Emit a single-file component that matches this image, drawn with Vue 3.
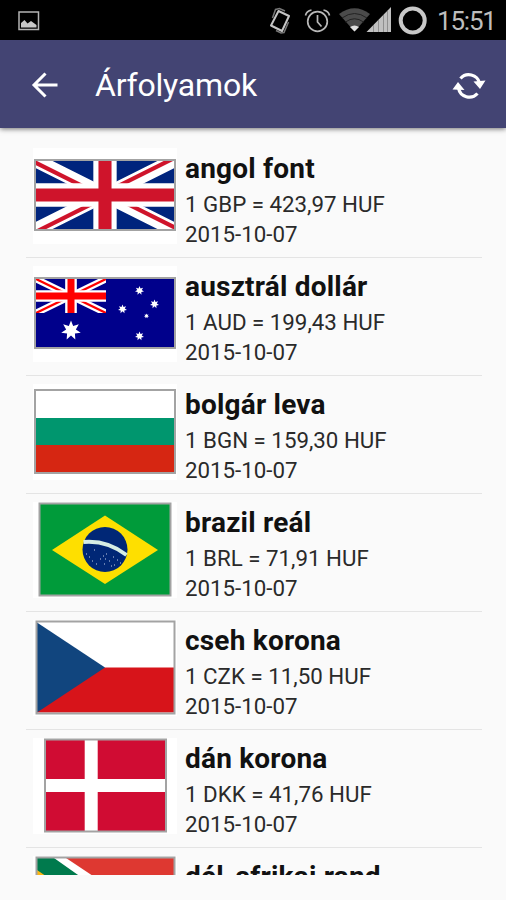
<template>
  <div class="screen">
    <div class="status-bar">
      <svg class="st-left" width="22" height="20" viewBox="0 0 22 20">
        <rect x="1" y="1" width="19.5" height="17.5" fill="none" stroke="#b4b4b4" stroke-width="1.5" />
        <path d="M3 16.5V12l3.5-3 3 3.5 3.5-2.500 5.500 4v2.500z" fill="#c8c8c8" />
      </svg>
      <svg class="st-icons" width="160" height="32" viewBox="267 5 160 32">
        <!-- 振动 -->
        <g fill="none" stroke="#c4c4c4">
          <path d="M278.500 11l10.500 5-7 15-11-5.500z" stroke-width="2" stroke-linejoin="round" />
          <path d="M272.500 18l3-8.500 4-1 5.500 2.500M288.500 22l-4.500 10.500-3 .5-5-2.500" stroke-width="1.500" stroke="#777" />
        </g>
        <!-- 闹钟 -->
        <g fill="none" stroke="#b8b8b8" stroke-width="1.700">
          <circle cx="317.500" cy="21.500" r="9.800" />
          <path d="M317.500 15v7l4 4.500M305.500 15.500q1-4.500 6-5.500M329.500 15.500q-1-4.500-6-5.500" />
        </g>
        <!-- WiFi -->
        <path d="M339 14Q354.500 2.500 370 14L354.500 31.500z" fill="#4b4b4b" />
        <path d="M342 18q12.500-9 25 0M345.500 22q9-6.500 18 0" fill="none" stroke="#222" stroke-width="1" />
        <path d="M350 27q4.500-3 9 0l-4.500 4.500z" fill="#e0e0e0" />
        <!-- 信号 -->
        <path d="M366.500 32L391 7v25z" fill="#c0c0c0" />
        <path d="M373.500 25v7M378.500 20v12M383.500 15v17M387.500 11v21" stroke="#8f8f8f" stroke-width="1" />
        <circle cx="412.700" cy="20.500" r="12" fill="none" stroke="#c8c8c8" stroke-width="4" />
      </svg>
      <span class="clock">15:51</span>
    </div>

    <div class="app-bar">
      <svg class="back" width="28" height="28" viewBox="0 0 28 28">
        <path d="M26.500 14H3M14.500 2.500L3 14l11.500 11.500" fill="none" stroke="#fff" stroke-width="3" />
      </svg>
      <h1 class="title">Árfolyamok</h1>
      <svg class="refresh" width="34" height="30" viewBox="452 69 34 30">
        <g fill="none" stroke="#fff" stroke-width="3.200">
          <path d="M460.500 77.500A11 11 0 0 1 479.500 82" />
          <path d="M477.500 92.500A11 11 0 0 1 458.500 87" />
        </g>
        <path d="M473.500 80.500l12-1-5.500 8.500zM464.500 89l-12-.5 5.500-7.500z" fill="#fff" />
      </svg>
    </div>

    <div class="list">
      <div v-for="r in rates" :key="r.code" class="row">
        <svg class="flag" width="144" height="96" viewBox="0 0 144 96">
          <rect width="144" height="96" fill="#fff" />
          <template v-if="r.code === 'GBP'">
            <svg x="2" y="12" width="140" height="70" viewBox="0 0 60 30" preserveAspectRatio="none">
              <rect width="60" height="30" fill="#00247d" />
              <path d="M0 0l60 30M60 0L0 30" stroke="#fff" stroke-width="6" />
              <path d="M0 0L30 15H26L0 2zM60 0L30 15H26L56 0zM0 30L30 15H34L4 30zM60 30L30 15H34L60 28z" fill="#cf142b" />
              <path d="M30 0v30M0 15h60" stroke="#fff" stroke-width="10" />
              <path d="M30 0v30M0 15h60" stroke="#cf142b" stroke-width="5.600" />
            </svg>
            <rect x="2" y="12" width="140" height="70" class="frame" />
          </template>
          <template v-else-if="r.code === 'AUD'">
            <rect x="2" y="12" width="140" height="70" fill="#00008b" />
            <svg x="3" y="13" width="70" height="34" viewBox="0 0 60 30" preserveAspectRatio="none">
              <path d="M0 0l60 30M60 0L0 30" stroke="#fff" stroke-width="6" />
              <path d="M0 0l60 30M60 0L0 30" stroke="#f00" stroke-width="2" />
              <path d="M30 0v30M0 15h60" stroke="#fff" stroke-width="10" />
              <path d="M30 0v30M0 15h60" stroke="#f00" stroke-width="6" />
            </svg>
            <polygon v-for="(s, i) in stars" :key="i" :points="starPoints(s)" fill="#fff" />
            <rect x="2" y="12" width="140" height="70" class="frame" />
          </template>
          <template v-else-if="r.code === 'BGN'">
            <rect x="2" y="34" width="140" height="28" fill="#00966e" />
            <rect x="2" y="61" width="140" height="28" fill="#d62612" />
            <rect x="2" y="6" width="140" height="83" class="frame" />
          </template>
          <template v-else-if="r.code === 'BRL'">
            <rect x="6.500" y="1.500" width="131" height="92" fill="#009b3a" />
            <path d="M19 48L72 13.500 125 48 72 82z" fill="#fedf00" />
            <circle cx="72" cy="47.500" r="22.500" fill="#002776" />
            <path d="M50.500 40Q74 38 93.500 53" fill="none" stroke="#d5ede4" stroke-width="4" />
            <path d="M53 52h1M56 55h1M61 48h1M59 59h1M63 62h1M70 54h1M73 52h1M72 57h1M76 59h1M71 62h1M81 63h1M84 58h1M87 61h1M80 55h1M78 64h1M67 57h1" stroke="#c5d1e8" stroke-width="1.200" />
            <rect x="6.500" y="1.500" width="131" height="92" class="frame" />
          </template>
          <template v-else-if="r.code === 'CZK'">
            <rect x="4" y="47.500" width="137" height="45" fill="#d7141a" />
            <path d="M4 2.500L72 47.500 4 92.500z" fill="#11457e" />
            <rect x="3.500" y="1.500" width="138" height="92" class="frame" />
          </template>
          <template v-else-if="r.code === 'DKK'">
            <rect x="12" y="1.500" width="121" height="92" fill="#d00c33" />
            <path d="M58.200 2v91M12 47.500h121" stroke="#fff" stroke-width="13" />
            <rect x="12" y="1.500" width="121" height="92" class="frame" />
          </template>
          <template v-else>
            <rect x="3.500" y="1.500" width="138" height="92" fill="#de3831" />
            <path d="M4 2H33L78 32H141V62H78L33 93H4z" fill="#fff" />
            <path d="M4 2H21L72 38H141V56H72L21 93H4z" fill="#007a4d" />
            <path d="M4 14L53 47.500 4 81z" fill="#ffb612" />
            <path d="M4 23L42 47.500 4 72z" fill="#000" />
            <rect x="3.500" y="1.500" width="138" height="92" class="frame" />
          </template>
        </svg>
        <div class="info">
          <div class="name">{{ r.name }}</div>
          <template v-if="r.value">
            <div class="rate">1 {{ r.code }} = {{ r.value }} HUF</div>
            <div class="date">{{ r.date }}</div>
          </template>
        </div>
      </div>
    </div>
  </div>
</template>

<script setup>
const rates = [
  { code: 'GBP', name: 'angol font', value: '423,97', date: '2015-10-07' },
  { code: 'AUD', name: 'ausztrál dollár', value: '199,43', date: '2015-10-07' },
  { code: 'BGN', name: 'bolgár leva', value: '159,30', date: '2015-10-07' },
  { code: 'BRL', name: 'brazil reál', value: '71,91', date: '2015-10-07' },
  { code: 'CZK', name: 'cseh korona', value: '11,50', date: '2015-10-07' },
  { code: 'DKK', name: 'dán korona', value: '41,76', date: '2015-10-07' },
  { code: 'ZAR', name: 'dél-afrikai rand' },
]

// [x, y, r]
const stars = [[38, 64.5, 10], [106.500, 24.5, 4.600], [89.500, 43, 4.600], [121.500, 38, 4.600], [113.500, 50, 2.600], [106.500, 70, 4.600]]

function starPoints([x, y, r]) {
  const pts = []
  for (let i = 0; i < 14; i++) {
    const a = (i * Math.PI) / 7 - Math.PI / 2
    const d = i % 2 ? r * 0.5 : r
    pts.push(`${(x + d * Math.cos(a)).toFixed(2)},${(y + d * Math.sin(a)).toFixed(2)}`)
  }
  return pts.join(' ')
}
</script>

<style>
body{margin:0;background:#fafafa}
</style>

<style scoped>
.screen{width:506px;height:900px;overflow:hidden;background:#fafafa;font-family:Roboto,"Liberation Sans",sans-serif;display:flex;flex-direction:column}

/* 状态栏 */
.status-bar{height:40px;flex:none;box-sizing:border-box;background:#000;display:flex;align-items:center;padding:0 10px 0 18px}
.st-left{margin-top:1px}
.st-icons{margin-left:auto;margin-top:2px}
.clock{width:59px;margin-left:10px;margin-top:2px;font-size:26px;line-height:30px;letter-spacing:-1.200px;color:#bdbdbd;white-space:nowrap}

/* 标题栏 */
.app-bar{height:88px;flex:none;box-sizing:border-box;background:#434473;display:flex;align-items:center;padding:1px 20px 0 31px;box-shadow:0 1px 5px rgba(0,0,0,.55);z-index:1}
.title{margin:1px 0 0 36px;font-size:32px;line-height:40px;font-weight:400;letter-spacing:-.2px;color:#fff}
.refresh{margin-left:auto}

/* 汇率列表 */
.list{height:735px;flex:none;overflow:hidden;padding:12px 24px 0 26px}
.row{height:118px;box-sizing:border-box;border-bottom:1px solid #e4e4e4;display:flex;padding:8px 0 0 7px}
.flag{flex:none}
.frame{fill:none;stroke:#a3a3a3;stroke-width:2}
.info{margin-left:8px;white-space:nowrap}
.name{font-size:28px;line-height:34px;margin-top:4px;font-weight:700;letter-spacing:.2px;color:#111}
.rate,.date{font-size:22.300px;line-height:30px;color:#2a2a2a}
.rate{margin-top:3px}
</style>
